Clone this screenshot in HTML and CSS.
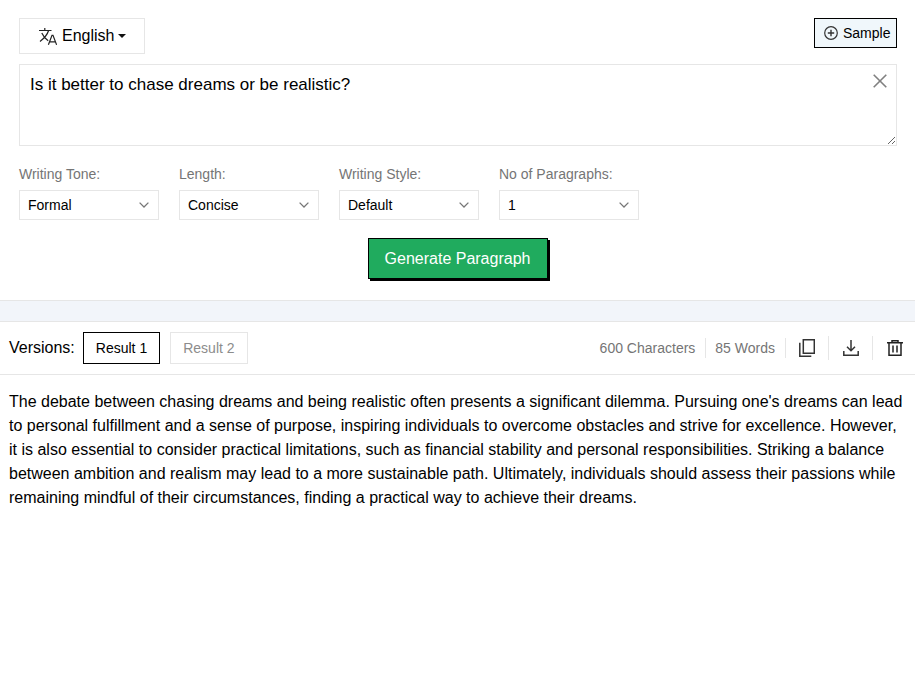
FILE: index.html
```html
<!DOCTYPE html>
<html lang="en">
<head>
<meta charset="utf-8">
<title>Paragraph Generator</title>
<link rel="stylesheet" href="styles.css">
</head>
<body>
<section class="form">
  <div class="top-row">
    <button class="lang-btn" type="button">
      <svg class="lang-icon" viewBox="0 0 18 17" width="18" height="17" fill="none" stroke="#222" stroke-width="1.2"><path d="M0 2.5h12.5M5.8 0v2.5M9.6 2.5C8.2 7 5.2 10.300 1 13.400M2.800 5c1.500 3.500 3.600 5.700 6.400 7.700"/><path d="M9.400 16.800 13 7.300h1l3.600 9.500M10.800 13.800h5.400"/></svg>
      <span>English</span>
      <span class="caret"></span>
    </button>
    <button class="sample-btn" type="button">
      <svg viewBox="0 0 14 14" width="14" height="14" fill="none" stroke="#333" stroke-width="1.2"><circle cx="7" cy="7" r="6.300"/><path d="M7 3.800v6.400M3.800 7h6.400" stroke-width="1.400"/></svg>
      <span>Sample</span>
    </button>
  </div>
  <div class="input-wrap">
    <textarea class="topic">Is it better to chase dreams or be realistic?</textarea>
    <svg class="clear" viewBox="0 0 14 14" width="14" height="14" fill="none" stroke="#808080" stroke-width="1.6"><path d="M0.700 0.700l12.600 12.600M13.300 0.700L0.700 13.300"/></svg>
  </div>
  <div class="options">
    <label class="option"><span class="option-label">Writing Tone:</span>
      <select><option>Formal</option></select></label>
    <label class="option"><span class="option-label">Length:</span>
      <select><option>Concise</option></select></label>
    <label class="option"><span class="option-label">Writing Style:</span>
      <select><option>Default</option></select></label>
    <label class="option"><span class="option-label">No of Paragraphs:</span>
      <select><option>1</option></select></label>
  </div>
  <div class="generate-row">
    <button class="generate" type="button">Generate Paragraph</button>
  </div>
</section>
<div class="strip"></div>
<section class="toolbar">
  <div class="versions">
    <span class="versions-label">Versions:</span>
    <button class="result active" type="button">Result 1</button>
    <button class="result" type="button">Result 2</button>
  </div>
  <div class="stats">
    <span class="stat">600 Characters</span>
    <span class="stat">85 Words</span>
    <span class="tool tool-copy"><svg viewBox="0 0 16 18" width="16" height="18" fill="none" stroke="#333" stroke-width="1.500"><path d="M4.300 0.800h11v13.400h-11z"/><path d="M0.800 3.800v13.400h11.500"/></svg></span>
    <span class="tool tool-dl"><svg viewBox="0 0 16 16" width="16" height="16" fill="none" stroke="#333" stroke-width="1.500"><path d="M8 0v10.500M4 6.800l4 4 4-4"/><path d="M0.800 11v4.200h14.400V11"/></svg></span>
    <span class="tool tool-del"><svg viewBox="0 0 16 16" width="16" height="16" fill="none" stroke="#222" stroke-width="1.500"><path d="M0 2.800h16M5 2.800V0.800h6v2M2 2.800v12.400h12V2.800M6 5.500v7M10 5.500v7"/></svg></span>
  </div>
</section>
<p class="output">The debate between chasing dreams and being realistic often presents a significant dilemma. Pursuing one's dreams can lead to personal fulfillment and a sense of purpose, inspiring individuals to overcome obstacles and strive for excellence. However, it is also essential to consider practical limitations, such as financial stability and personal responsibilities. Striking a balance between ambition and realism may lead to a more sustainable path. Ultimately, individuals should assess their passions while remaining mindful of their circumstances, finding a practical way to achieve their dreams.</p>
</body>
</html>
```
FILE: styles.css
```css
* { box-sizing: border-box; }
html, body { margin: 0; padding: 0; }
body {
  background: #fff;
  color: #000;
  font-family: "Liberation Sans", Arial, sans-serif;
  font-size: 16px;
}
button, select, textarea { font-family: inherit; }

.form { padding: 18px 18px 21px 19px; }
.top-row { display: flex; justify-content: space-between; align-items: flex-start; }
.lang-btn {
  display: flex; align-items: center;
  width: 126px; height: 36px; padding: 0 0 0 19px;
  background: #fff; border: 1px solid #e6e6e6; color: #000;
  font-size: 16px;
}
.lang-icon { margin-right: 5px; }
.caret {
  width: 0; height: 0; margin-left: 4px;
  border-left: 4px solid transparent; border-right: 4px solid transparent;
  border-top: 4px solid #111;
}
.sample-btn {
  display: flex; align-items: center; gap: 5px;
  width: 83px; height: 30px; padding: 0 0 0 9px;
  background: #f0f7fb; border: 1px solid #000; color: #000;
  font-size: 14px;
}
.input-wrap { position: relative; margin-top: 10px; height: 82px; }
.topic {
  display: block; width: 100%; height: 82px;
  padding: 10px; border: 1px solid #e6e6e6; outline: none;
  font-size: 17px; line-height: 20px; color: #000; background: #fff;
  resize: vertical;
}
.clear { position: absolute; top: 10px; right: 10px; }
.options { display: flex; gap: 20px; margin-top: 19px; }
.option { display: flex; flex-direction: column; width: 140px; }
.option-label { font-size: 14px; line-height: 18px; color: #757575; margin-bottom: 7px; }
select {
  appearance: none; -webkit-appearance: none;
  width: 140px; height: 30px; padding: 0 8px;
  border: 1px solid #e6e6e6; border-radius: 0; outline: none;
  font-size: 14px; color: #000;
  background: #fff url("data:image/svg+xml,%3Csvg xmlns='http://www.w3.org/2000/svg' width='10' height='6'%3E%3Cpath d='M.6.6 5 5l4.4-4.4' fill='none' stroke='%23777' stroke-width='1.3'/%3E%3C/svg%3E") no-repeat right 9px center;
}
.generate-row { display: flex; justify-content: center; margin-top: 18px; padding-right: 1px; }
.generate {
  width: 180px; height: 41px; padding: 0;
  background: #20ab5e; color: #fff;
  border: 1px solid #000; box-shadow: 2px 2px 0 #000;
  font-size: 16px;
}
.strip {
  height: 22px;
  background: #f2f5fa;
  border-top: 1px solid #e6e6e6;
  border-bottom: 1px solid #e6e6e6;
}
.toolbar {
  display: flex; justify-content: space-between; align-items: center;
  height: 53px; padding: 0 9px;
  border-bottom: 1px solid #e6e6e6;
}
.versions { display: flex; align-items: center; }
.versions-label { font-size: 16px; margin-right: 8px; }
.result {
  width: 77.4px; height: 32px; padding: 0; margin-right: 10px;
  background: #fff; border: 1px solid #e6e6e6; color: #8c8c8c;
  font-size: 14px;
}
.result.active { border-color: #000; color: #000; }
.stats { display: flex; align-items: center; }
.stat {
  font-size: 14px; line-height: 20px; color: #757575;
  padding-right: 10px; border-right: 1px solid #e6e6e6;
}
.stat + .stat { margin-left: 9px; }
.tool {
  display: flex; align-items: center; height: 24px;
  padding: 0 13px 0 14px; border-right: 1px solid #e6e6e6;
}
.tool-copy { padding-left: 13px; }
.tool-del { padding-right: 3px; border-right: 0; }
.output {
  margin: 0; padding: 15px 9px;
  font-size: 16px; line-height: 24px; color: #000;
}
```
